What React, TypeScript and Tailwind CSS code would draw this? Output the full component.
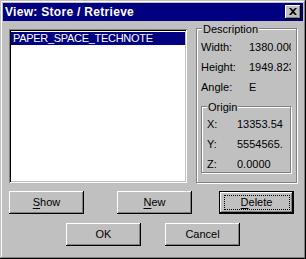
const raised =
  'shadow-[inset_-1px_-1px_#000,inset_1px_1px_#fff,inset_-2px_-2px_#808080,inset_2px_2px_#c0c0c0]';

function Btn({ label, u, rest, def, className }: { label?: string; u?: string; rest?: string; def?: boolean; className?: string }) {
  return (
    <div
      className={`h-[23px] w-[75px] flex items-center justify-center bg-[#c0c0c0] text-[11px] text-black ${
        def ? 'border border-black' : ''
      } ${className ?? ''}`}
    >
      <div className={`w-full h-full flex items-center justify-center ${raised}`}>
        {def ? (
          <div className="w-[calc(100%-7px)] h-[calc(100%-6px)] border border-dotted border-black flex items-center justify-center">
            <span>
              <span className="underline underline-offset-2">{u}</span>
              {rest}
            </span>
          </div>
        ) : (
          <span>
            {u && <span className="underline underline-offset-2">{u}</span>}
            {rest ?? label}
          </span>
        )}
      </div>
    </div>
  );
}

function Row({ label, value, lw, vw }: { label: string; value: string; lw: string; vw: string }) {
  return (
    <div className="flex h-[20px] items-center whitespace-nowrap">
      <span className={lw}>{label}</span>
      <span className={`${vw} overflow-hidden`}>{value}</span>
    </div>
  );
}

export default function App() {
  return (
    <div
      className="w-[306px] h-[259px] bg-[#c0c0c0] p-[3px] flex flex-col text-black font-['Liberation_Sans',Arial,sans-serif] shadow-[inset_-1px_-1px_#000,inset_1px_1px_#c0c0c0,inset_-2px_-2px_#808080,inset_2px_2px_#fff]"
    >
      {/* title bar */}
      <div className="h-[18px] bg-[#000080] flex items-center justify-between pl-[2px] pr-[2px]">
        <span className="text-white font-bold text-[12px] tracking-[0.3px]">View: Store / Retrieve</span>
        <div className={`w-[16px] h-[14px] bg-[#c0c0c0] flex items-center justify-center ${raised}`}>
          <svg width="8" height="7" viewBox="0 0 8 7" className="mb-[1px]">
            <path d="M0 0h2l2 2 2-2h2L5 3.5 8 7H6L4 5 2 7H0l3-3.5z" fill="#000" />
          </svg>
        </div>
      </div>

      <div className="flex items-start pl-[6px] pt-[8px]">
        {/* list box */}
        <div className="w-[178px] h-[154px] bg-white p-[2px] shadow-[inset_1px_1px_#808080,inset_-1px_-1px_#fff,inset_2px_2px_#000,inset_-2px_-2px_#c0c0c0]">
          <div className="h-[13px] mt-[1px] bg-[#000080] text-white text-[11px] tracking-[-0.3px] leading-[13px] pl-[2px] whitespace-nowrap">
            PAPER_SPACE_TECHNOTE
          </div>
        </div>

        {/* description group */}
        <div className="relative ml-[9px] -mt-[1px] w-[101px] h-[155px] text-[11px]">
          <div className="absolute inset-0 border border-[#808080] shadow-[1px_1px_#fff,inset_1px_1px_#fff]" />
          <span className="absolute -top-[7px] left-[6px] px-[1px] bg-[#c0c0c0]">Description</span>
          <div className="relative pt-[9px] pl-[5px]">
            <Row label="Width:" value="1380.0000" lw="w-[48px]" vw="w-[42px]" />
            <Row label="Height:" value="1949.8231" lw="w-[48px]" vw="w-[42px]" />
            <Row label="Angle:" value="E" lw="w-[48px]" vw="w-[42px]" />
            <div className="relative mt-[9px] w-[90px] h-[67px]">
              <div className="absolute inset-0 border border-[#808080] shadow-[1px_1px_#fff,inset_1px_1px_#fff]" />
              <span className="absolute -top-[7px] left-[6px] px-[1px] bg-[#c0c0c0]">Origin</span>
              <div className="relative pt-[8px] pl-[6px]">
                <Row label="X:" value="13353.54" lw="w-[30px]" vw="w-[50px]" />
                <Row label="Y:" value="5554565." lw="w-[30px]" vw="w-[50px]" />
                <Row label="Z:" value="0.0000" lw="w-[30px]" vw="w-[50px]" />
              </div>
            </div>
          </div>
        </div>
      </div>

      <div className="flex pl-[6px] mt-[8px]">
        <Btn u="S" rest="how" />
        <Btn u="N" rest="ew" className="ml-[33px]" />
        <Btn u="D" rest="elete" def className="ml-[27px]" />
      </div>

      <div className="flex pl-[63px] mt-[9px]">
        <Btn label="OK" />
        <Btn label="Cancel" className="ml-[24px]" />
      </div>
    </div>
  );
}
